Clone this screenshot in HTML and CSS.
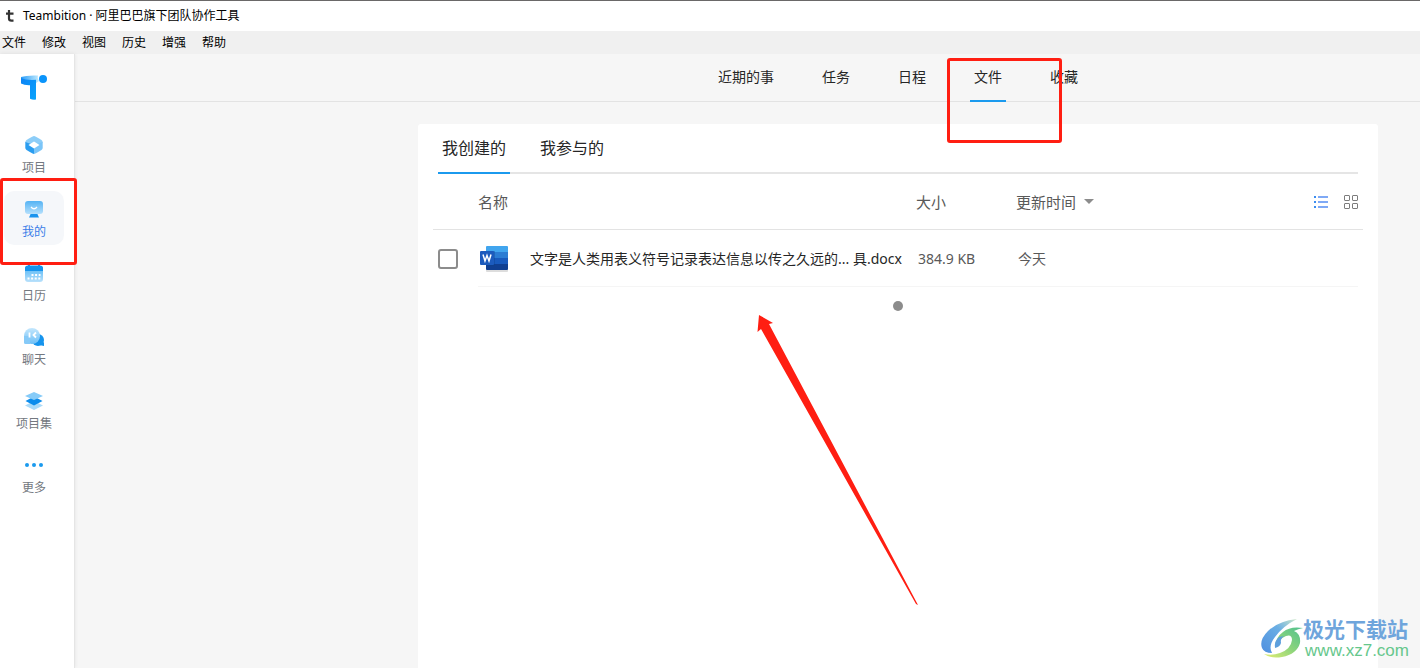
FILE: index.html
```html
<!DOCTYPE html>
<html lang="zh-CN">
<head>
<meta charset="utf-8">
<title>Teambition · 阿里巴巴旗下团队协作工具</title>
<link rel="stylesheet" href="styles.css">
</head>
<body>
<header class="titlebar">
  <svg class="app-icon" width="8" height="12" viewBox="0 0 8 12" aria-hidden="true"><path d="M3 0V8.500Q3 10.700 5.500 10.700H7.500M0 3.700H7.500" fill="none" stroke="#333" stroke-width="2.200"/></svg>
  <span>Teambition · 阿里巴巴旗下团队协作工具</span>
</header>
<div class="menubar">
  <button type="button">文件</button><button type="button">修改</button><button type="button">视图</button><button type="button">历史</button><button type="button">增强</button><button type="button">帮助</button>
</div>
<div class="app">
  <aside class="sidebar">
    <svg class="logo" width="28" height="28" viewBox="0 0 28 28" aria-hidden="true">
      <defs>
        <linearGradient id="gt" x1="0" y1="0" x2="1" y2="0"><stop offset="0" stop-color="#2a9df8"/><stop offset="1" stop-color="#c3ebfd"/></linearGradient>
        <linearGradient id="gs" x1="0" y1="0" x2="1" y2="1"><stop offset="0" stop-color="#0d83f5"/><stop offset="1" stop-color="#09a4fc"/></linearGradient>
        <linearGradient id="gi" x1="0" y1="0" x2="0" y2="1"><stop offset="0" stop-color="#4eb4f6"/><stop offset="1" stop-color="#b9e1fb"/></linearGradient>
        <linearGradient id="gl" x1="0" y1="0" x2="0" y2="1"><stop offset="0" stop-color="#c4e7fd"/><stop offset="1" stop-color="#6dbff6"/></linearGradient>
        <linearGradient id="gm" x1="0" y1="0" x2="0" y2="1"><stop offset="0" stop-color="#55b3f4"/><stop offset="1" stop-color="#b5e0fc"/></linearGradient>
      </defs>
      <path d="M1 4Q7 2 18 2.500Q17 5 19 8L16 10L1 7Z" fill="url(#gt)"/>
      <path d="M1 5Q6 7.500 16 6.800V26.500Q13 27 10 25.800V12.300Q4 12.500 1 10.500Z" fill="url(#gs)"/>
      <circle cx="23" cy="6" r="4" fill="#0a94fb"/>
    </svg>
    <nav class="side-nav">
      <a href="#"><svg width="20" height="20" viewBox="0 0 20 20" aria-hidden="true"><path d="M10 1Q11 1 17.500 5Q19 6 18.500 8L10 10L1.500 8Q1 6 2.500 5Q9 1 10 1Z" fill="#8ccdf8"/><path d="M1.300 7L10 10V19Q9 19 2.500 15Q1.300 14 1.300 13Z" fill="#2a9df0"/><path d="M18.700 7L10 10V19Q11 19 17.500 15Q18.700 14 18.700 13Z" fill="#7bc5f8"/><path d="M10 6.500L15.500 10L10 13.500L4.500 10Z" fill="#fff"/></svg><span>项目</span></a>
      <a href="#" class="active"><svg width="20" height="20" viewBox="0 0 20 20" aria-hidden="true"><path d="M7.500 13H12.500L15 18.500H5Z" fill="#1b94ee"/><rect x="1" y="2" width="18" height="13" rx="3" fill="url(#gm)"/><path d="M7 8Q10 11.500 13 8" fill="none" stroke="#fff" stroke-width="1.300"/></svg><span>我的</span></a>
      <a href="#"><svg width="20" height="20" viewBox="0 0 20 20" aria-hidden="true"><rect x="1" y="3" width="18" height="16" rx="3" fill="url(#gi)"/><path d="M1 8V5Q1 2.500 4 2.500H16Q19 2.500 19 5V8Z" fill="#1694ed"/><path d="M5 1V4M15 1V4" stroke="#1694ed" stroke-width="2"/><path d="M7.500 12H16.500M3.500 15.500H16.500" stroke="#fff" stroke-width="2" stroke-dasharray="2 1.600"/></svg><span>日历</span></a>
      <a href="#"><svg width="20" height="20" viewBox="0 0 20 20" aria-hidden="true"><circle cx="14" cy="13" r="6" fill="#1694ed"/><path d="M15 18L20 15V19Z" fill="#1694ed"/><circle cx="8" cy="9" r="8" fill="url(#gl)"/><path d="M0 9H6V17H1.500Q0 17 0 15.500Z" fill="#86caf8"/><path d="M5.500 5.500V10.500M12 5.500L9.500 8L12 10.500" fill="none" stroke="#fff" stroke-width="1.800"/></svg><span>聊天</span></a>
      <a href="#"><svg width="20" height="20" viewBox="0 0 20 20" aria-hidden="true"><path d="M10 10L19 14.500L10 19L1 14.500Z" fill="#a9daf9"/><path d="M10 5.500L18.500 10L10 14.500L1.500 10Z" fill="#0c8cec"/><path d="M10 1L19 5L10 9L1 5Z" fill="#86cbf8"/></svg><span>项目集</span></a>
      <a href="#"><svg width="20" height="20" viewBox="0 0 20 20" aria-hidden="true" fill="#1b9aee"><circle cx="3" cy="10" r="2"/><circle cx="10" cy="10" r="2"/><circle cx="17" cy="10" r="2"/></svg><span>更多</span></a>
    </nav>
  </aside>
  <main class="main">
    <nav class="top-nav">
      <a href="#">近期的事</a><a href="#">任务</a><a href="#">日程</a><a href="#" class="active">文件</a><a href="#">收藏</a>
    </nav>
    <div class="content">
      <section class="card">
        <div class="tabs">
          <button type="button" class="active">我创建的</button><button type="button">我参与的</button>
        </div>
        <table class="files">
          <colgroup><col class="c-check"><col><col class="c-size"><col class="c-time"></colgroup>
          <thead>
            <tr>
              <td></td><th scope="col">名称</th><th scope="col">大小</th>
              <th scope="col"><div class="time-head">
                <button type="button" class="sort">更新时间<span class="caret"></span></button>
                <span class="views">
                  <button type="button" aria-label="列表"><svg width="14" height="14" viewBox="0 0 14 14" aria-hidden="true"><path d="M0 2H2M0 7H2M0 12H2" stroke="#3b8df0" stroke-width="2"/><path d="M4 2H14M4 7H14M4 12H14" stroke="#7fa9f5" stroke-width="2"/></svg></button>
                  <button type="button" aria-label="网格"><svg width="14" height="14" viewBox="0 0 14 14" aria-hidden="true" fill="none" stroke="#7d7d7d"><rect x=".5" y=".5" width="5" height="5" rx=".5"/><rect x="8.500" y=".5" width="5" height="5" rx=".5"/><rect x=".5" y="8.500" width="5" height="5" rx=".5"/><rect x="8.500" y="8.500" width="5" height="5" rx=".5"/></svg></button>
                </span></div></th>
            </tr>
          </thead>
          <tbody>
            <tr>
              <td class="check"><input type="checkbox" aria-label="选择文件"></td>
              <td><a href="#" class="file"><svg width="30" height="28" viewBox="0 0 30 28" aria-hidden="true"><rect x="6" y="3" width="22" height="24" rx="1" fill="#ddd"/><path d="M7 1H27Q28 1 28 2V7H6V2Q6 1 7 1Z" fill="#41a5ee"/><path d="M6 7H28V13H6Z" fill="#2b7cd3"/><path d="M6 13H28V19H6Z" fill="#185abd"/><path d="M6 19H28V24Q28 25 27 25H7Q6 25 6 24Z" fill="#103f91"/><path d="M6 6H15V21H6Z" fill="#0c3e8a" opacity=".35"/><rect y="6" width="14" height="14" rx="1" fill="#1c5bbd"/><path d="M3 9.500L5 16L7 10.500L9 16L11 9.500" fill="none" stroke="#fff" stroke-width="1.500"/></svg><span>文字是人类用表义符号记录表达信息以传之久远的... 具.docx</span></a></td>
              <td class="sub">384.9 KB</td><td class="sub">今天</td>
            </tr>
          </tbody>
        </table>
        <div class="loading"></div>
      </section>
    </div>
  </main>
</div>
<div class="mark mark-mine"></div>
<div class="mark mark-files"></div>
<svg class="arrow" width="164" height="294" viewBox="0 0 164 294" aria-hidden="true"><path d="M4 2L18 10L14 11L163 292L161 291L6 16L2.500 19Z" fill="#ff1e12"/></svg>
<div class="watermark">
  <svg width="42" height="40" viewBox="0 0 42 40" aria-hidden="true">
    <defs><linearGradient id="wa" x1="0" y1="1" x2="1" y2="0"><stop offset="0" stop-color="#4f8fe0"/><stop offset=".6" stop-color="#6aaee4"/><stop offset="1" stop-color="#cfe8c8"/></linearGradient>
    <linearGradient id="wb" x1="0" y1="1" x2="1" y2="0"><stop offset="0" stop-color="#e4ee72"/><stop offset=".5" stop-color="#8bd47c"/><stop offset="1" stop-color="#4fc08f"/></linearGradient></defs>
    <path d="M36 0Q17 2 7 12Q-2 21 1 29Q3 34 11 34Q7 27 14 18Q22 7 36 0Z" fill="url(#wa)"/>
    <path d="M42 9Q29 7 22 13Q15 18 14 27Q18 20 25 17Q31 15 31 21Q30 30 19 34Q11 37 3 35Q10 40 21 38Q36 35 39 24Q40 15 33 12Q37 10 42 9Z" fill="url(#wb)"/>
    <path d="M14 29Q13 22 18 18L23 17Q19 20 20 24Q19 28 14 29Z" fill="#5d9fdd"/>
  </svg>
  <div class="wm-text"><strong>极光下载站</strong><span>www.xz7.com</span></div>
</div>
</body>
</html>
```
FILE: styles.css
```css
* { box-sizing: border-box; }
body {
  margin: 0;
  min-height: 100vh;
  display: flex;
  flex-direction: column;
  position: relative;
  overflow: hidden;
  background: #fff;
  color: #262626;
  font: 14px/20px "Noto Sans", "Noto Sans CJK SC", sans-serif;
}
button { margin: 0; padding: 0; border: 0; background: none; color: inherit; font: inherit; }
a { color: inherit; text-decoration: none; }
svg { display: block; flex: none; }

.titlebar {
  display: flex;
  align-items: center;
  gap: 9px;
  height: 31px;
  padding-left: 6px;
  border-top: 1px solid #6a6868;
  color: #000;
  font-size: 12px;
}
.menubar {
  display: flex;
  gap: 16px;
  height: 23px;
  padding-left: 2px;
  background: #f0f0f0;
  color: #000;
  font-size: 12px;
}
.app { flex: 1; display: flex; }

.sidebar {
  flex: none;
  width: 75px;
  padding: 19px 0 0 4px;
  border-right: 1px solid #e5e5e5;
  box-shadow: 0 0 4px rgba(0, 0, 0, .08);
  position: relative;
}
.logo { margin-left: 16px; }
.side-nav { display: flex; flex-direction: column; gap: 10px; padding-top: 26px; }
.side-nav a {
  display: flex;
  flex-direction: column;
  align-items: center;
  gap: 3px;
  width: 60px;
  height: 54px;
  padding-top: 8px;
  border-radius: 10px;
  color: #737880;
  font-size: 12px;
}
.side-nav .active { background: #f5f7fa; color: #3a7de8; }

.main { flex: 1; display: flex; flex-direction: column; background: #f6f6f6; }
.top-nav {
  display: flex;
  justify-content: center;
  gap: 40px;
  height: 48px;
  padding-left: 301px;
  border-bottom: 1px solid #e3e3e3;
}
.top-nav a { height: 48px; padding: 13px 4px 0; }
.top-nav .active { border-bottom: 2px solid #1b9aee; }

.content { flex: 1; display: flex; justify-content: center; padding: 22px 0 0 301px; }
.card { width: 960px; padding: 0 20px; border-radius: 3px 3px 0 0; background: #fff; }
.tabs { display: flex; gap: 26px; height: 50px; border-bottom: 2px solid #e5e5e5; font-size: 16px; }
.tabs button { height: 50px; padding: 0 4px 2px; }
.tabs .active { padding-bottom: 0; border-bottom: 2px solid #1b9aee; }

.files { width: calc(100% + 10px); margin: 0 -5px; border-spacing: 0; table-layout: fixed; }
.files th, .files td { padding: 0; text-align: left; font-weight: 400; }
.c-check { width: 45px; }
.c-size { width: 100px; }
.c-time { width: 347px; }
.files thead tr { height: 56px; color: #595959; font-size: 15px; }
.files thead th, .files thead td { border-bottom: 1px solid #e3e3e3; }
.time-head { display: flex; align-items: center; justify-content: space-between; padding-right: 5px; }
.sort { display: flex; align-items: center; gap: 8px; }
.caret { border: 5px solid transparent; border-top-color: #8c8c8c; border-bottom: 0; }
.views { display: flex; gap: 16px; }
.files tbody tr { height: 57px; background: linear-gradient(#f5f5f5, #f5f5f5) 45px 100% / calc(100% - 50px) 1px no-repeat; }
.files .check { padding-left: 5px; }
.check input {
  display: block;
  appearance: none;
  width: 20px;
  height: 20px;
  margin: 0;
  border: 2px solid #8c8c8c;
  border-radius: 3px;
  background: #fff;
}
.file { display: flex; align-items: center; gap: 20px; padding-left: 2px; white-space: nowrap; }
.files .sub { padding-left: 2px; color: #595959; }
.loading { width: 10px; height: 10px; margin: 14px auto 0; border-radius: 50%; background: #8c8c8c; }

.mark { position: absolute; border: 3px solid #ff1e12; border-radius: 3px; pointer-events: none; }
.mark-mine { left: 0; top: 178px; width: 77px; height: 87px; }
.mark-files { left: 947px; top: 58px; width: 115px; height: 85px; }
.arrow { position: absolute; left: 755px; top: 313px; pointer-events: none; }
.watermark { position: absolute; right: 11px; bottom: 8px; display: flex; align-items: center; pointer-events: none; }
.wm-text { display: flex; flex-direction: column; font-family: "Liberation Sans", "Noto Sans CJK SC", sans-serif; }
.wm-text strong { color: #6fa5dc; font-size: 21px; line-height: 24px; }
.wm-text span { padding-left: 2px; color: #66c78c; font-size: 17px; line-height: 18px; }
```
